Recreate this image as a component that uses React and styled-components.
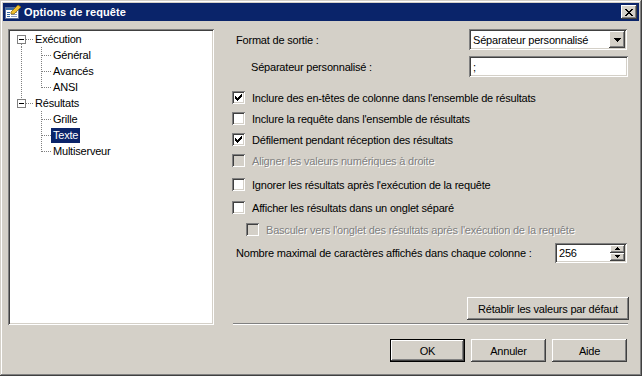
import React from "react";
import styled, { createGlobalStyle, css } from "styled-components";

const GlobalStyle = createGlobalStyle`
  html, body { margin: 0; padding: 0; background: #d4d0c8; }
  body { font-family: "Liberation Sans", Arial, sans-serif; font-size: 11px; color: #000; }
  * { box-sizing: border-box; }
`;

const raised = css`
  background: #d4d0c8;
  box-shadow: inset -1px -1px #404040, inset 1px 1px #ffffff, inset -2px -2px #808080, inset 2px 2px #d4d0c8;
`;
const sunken = css`
  box-shadow: inset 1px 1px #808080, inset -1px -1px #ffffff, inset 2px 2px #404040, inset -2px -2px #d4d0c8;
`;

const Window = styled.div`
  width: 642px;
  height: 376px;
  padding: 3px;
  display: flex;
  flex-direction: column;
  background: #d4d0c8;
  letter-spacing: -0.2px;
  box-shadow: inset -1px -1px #404040, inset 1px 1px #d4d0c8, inset -2px -2px #808080, inset 2px 2px #ffffff;
`;

const TitleBar = styled.div`
  height: 18px;
  background: #0a246a;
  display: flex;
  align-items: center;
  padding: 0 2px 0 2px;
  gap: 3px;
`;

const TitleText = styled.span`
  color: #fff;
  font-weight: bold;
  font-size: 11px;
  letter-spacing: 0.1px;
`;

const CloseButton = styled.div`
  ${raised};
  margin-left: auto;
  width: 16px;
  height: 14px;
  display: flex;
  align-items: center;
  justify-content: center;
`;

const Body = styled.div`
  flex: 1;
  display: flex;
  flex-direction: column;
  padding: 8px 10px 0 5px;
`;

const MainRow = styled.div`
  display: flex;
  gap: 18px;
`;

const Tree = styled.div`
  width: 206px;
  height: 296px;
  background: #fff;
  ${sunken};
  padding: 2px 2px;
  display: flex;
  flex-direction: column;
`;

const TreeRow = styled.div`
  height: 16px;
  display: flex;
  align-items: center;
`;

const TreeLabel = styled.span`
  padding: 1px 2px;
  margin-left: -2px;
  line-height: 13px;
  ${(p) =>
    p.$selected &&
    css`
      background: #0a246a;
      color: #fff;
    `}
`;

const RightPanel = styled.div`
  width: 397px;
  height: 296px;
  display: flex;
  flex-direction: column;
`;

const FieldRow = styled.div`
  height: 21px;
  margin-top: ${(p) => p.$mt || 0}px;
  display: flex;
  align-items: center;
  justify-content: space-between;
  padding-left: ${(p) => p.$indent || 4}px;
`;

const Combo = styled.div`
  width: 158px;
  height: 21px;
  margin-right: 2px;
  background: #fff;
  ${sunken};
  padding: 2px;
  display: flex;
  align-items: center;
`;

const ComboText = styled.span`
  flex: 1;
  padding-left: 2px;
`;

const DropButton = styled.div`
  ${raised};
  width: 16px;
  height: 17px;
  display: flex;
  align-items: center;
  justify-content: center;
`;

const TextInput = styled.div`
  width: 159px;
  height: 21px;
  margin-right: 1px;
  background: #fff;
  ${sunken};
  padding: 0 4px;
  display: flex;
  align-items: center;
`;

const CheckRow = styled.div`
  height: 21px;
  margin-top: ${(p) => p.$mt || 0}px;
  padding-left: ${(p) => p.$indent || 0}px;
  display: flex;
  align-items: center;
  gap: 7px;
  color: ${(p) => (p.$disabled ? "#808080" : "#000")};
  text-shadow: ${(p) => (p.$disabled ? "1px 1px 0 #fff" : "none")};
`;

const Box = styled.div`
  width: 13px;
  height: 13px;
  flex: none;
  background: ${(p) => (p.$disabled ? "#d4d0c8" : "#fff")};
  ${sunken};
  display: flex;
  align-items: center;
  justify-content: center;
`;

const Spin = styled.div`
  width: 72px;
  height: 20px;
  margin-right: 2px;
  background: #fff;
  ${sunken};
  padding: 2px;
  display: flex;
  align-items: stretch;
`;

const SpinText = styled.span`
  flex: 1;
  padding-left: 2px;
  display: flex;
  align-items: center;
`;

const SpinButtons = styled.div`
  width: 15px;
  display: flex;
  flex-direction: column;
`;

const SpinButton = styled.div`
  ${raised};
  flex: 1;
  display: flex;
  align-items: center;
  justify-content: center;
`;

const Spacer = styled.div`
  flex: 1;
`;

const Button = styled.div`
  ${raised};
  width: ${(p) => p.$w || 75}px;
  height: 23px;
  display: flex;
  align-items: center;
  justify-content: center;
  ${(p) =>
    p.$default &&
    css`
      box-shadow: inset 0 0 0 1px #000, inset -2px -2px #404040, inset 2px 2px #ffffff,
        inset -3px -3px #808080;
    `}
`;

const ResetButton = styled(Button)`
  align-self: flex-end;
`;

const Separator = styled.div`
  margin: 3px 1px 0 1px;
  height: 2px;
  border-top: 1px solid #808080;
  border-bottom: 1px solid #ffffff;
`;

const Footer = styled.div`
  margin-top: 14px;
  display: flex;
  justify-content: flex-end;
  gap: 6px;
  padding-right: 2px;
`;

const CHECK_RUNS = [2, 3, 4, 3, 2, 1, 0];

function CheckMark() {
  return (
    <svg width="7" height="7" viewBox="0 0 7 7" shapeRendering="crispEdges">
      {CHECK_RUNS.map((r, c) => (
        <rect key={c} x={c} y={r} width="1" height="3" fill="#000" />
      ))}
    </svg>
  );
}

function Check({ checked, disabled, indent, mt, children }) {
  return (
    <CheckRow $disabled={disabled} $indent={indent} $mt={mt}>
      <Box $disabled={disabled}>{checked && <CheckMark />}</Box>
      <span>{children}</span>
    </CheckRow>
  );
}

function TitleIcon() {
  return (
    <svg width="16" height="16" viewBox="0 0 16 16" shapeRendering="crispEdges">
      <rect x="0.5" y="3.5" width="13" height="11" fill="#fff" stroke="#5a6e9c" />
      <rect x="1" y="4" width="12" height="2" fill="#3a6ea5" />
      <rect x="2" y="8" width="3" height="1" fill="#3a6ea5" />
      <rect x="6" y="8" width="6" height="1" fill="#8a9ac0" />
      <rect x="2" y="10" width="3" height="1" fill="#3a6ea5" />
      <rect x="6" y="10" width="6" height="1" fill="#8a9ac0" />
      <rect x="2" y="12" width="3" height="1" fill="#3a6ea5" />
      <rect x="6" y="12" width="6" height="1" fill="#8a9ac0" />
      <polygon points="6,8 13,1 16,3 9,10 6,10" fill="#f0c030" stroke="#8a6a10" strokeWidth="0.8" shapeRendering="auto" />
    </svg>
  );
}

function CloseGlyph() {
  return (
    <svg width="8" height="7" viewBox="0 0 8 7" shapeRendering="crispEdges">
      {[0, 1, 2, 3, 4, 5, 6].map((i) => (
        <React.Fragment key={i}>
          <rect x={i} y={i} width="2" height="1" fill="#000" />
          <rect x={6 - i} y={i} width="2" height="1" fill="#000" />
        </React.Fragment>
      ))}
    </svg>
  );
}

function DownArrow() {
  return (
    <svg width="7" height="4" viewBox="0 0 7 4" shapeRendering="crispEdges">
      <rect x="0" y="0" width="7" height="1" fill="#000" />
      <rect x="1" y="1" width="5" height="1" fill="#000" />
      <rect x="2" y="2" width="3" height="1" fill="#000" />
      <rect x="3" y="3" width="1" height="1" fill="#000" />
    </svg>
  );
}

function SmallArrow({ up }) {
  return (
    <svg width="5" height="3" viewBox="0 0 5 3" shapeRendering="crispEdges" style={up ? undefined : { transform: "scaleY(-1)" }}>
      <rect x="2" y="0" width="1" height="1" fill="#000" />
      <rect x="1" y="1" width="3" height="1" fill="#000" />
      <rect x="0" y="2" width="5" height="1" fill="#000" />
    </svg>
  );
}

/* Tree connectors: drawn per row. x offsets relative to tree inner left edge. */
function Connector({ level, expander, lineAbove, lineBelow, parentLine, last }) {
  const dot = { stroke: "#808080", strokeDasharray: "1 1", strokeWidth: 1 };
  if (level === 0) {
    return (
      <svg width="25" height="16" viewBox="0 0 25 16" shapeRendering="crispEdges">
        {lineAbove && <line x1="11.5" y1="0" x2="11.5" y2="4" {...dot} />}
        {lineBelow && <line x1="11.5" y1="13" x2="11.5" y2="16" {...dot} />}
        <line x1="16" y1="8.5" x2="23" y2="8.5" {...dot} />
        {expander && (
          <g>
            <rect x="7.5" y="4.5" width="8" height="8" fill="#fff" stroke="#808080" />
            <rect x="9" y="8" width="5" height="1" fill="#000" />
          </g>
        )}
      </svg>
    );
  }
  return (
    <svg width="43" height="16" viewBox="0 0 43 16" shapeRendering="crispEdges">
      {parentLine && <line x1="11.5" y1="0" x2="11.5" y2="16" {...dot} />}
      <line x1="31.5" y1="0" x2="31.5" y2={last ? 9 : 16} {...dot} />
      <line x1="32" y1="8.5" x2="41" y2="8.5" {...dot} />
    </svg>
  );
}

const treeItems = [
  { label: "Exécution", level: 0, expander: true, lineBelow: true },
  { label: "Général", level: 1, parentLine: true },
  { label: "Avancés", level: 1, parentLine: true },
  { label: "ANSI", level: 1, parentLine: true, last: true },
  { label: "Résultats", level: 0, expander: true, lineAbove: true },
  { label: "Grille", level: 1 },
  { label: "Texte", level: 1, selected: true },
  { label: "Multiserveur", level: 1, last: true },
];

export default function App() {
  return (
    <>
      <GlobalStyle />
      <Window>
        <TitleBar>
          <TitleIcon />
          <TitleText>Options de requête</TitleText>
          <CloseButton>
            <CloseGlyph />
          </CloseButton>
        </TitleBar>
        <Body>
          <MainRow>
            <Tree>
              {treeItems.map((it) => (
                <TreeRow key={it.label}>
                  <Connector {...it} />
                  <TreeLabel $selected={it.selected}>{it.label}</TreeLabel>
                </TreeRow>
              ))}
            </Tree>
            <RightPanel>
              <FieldRow>
                <span>Format de sortie :</span>
                <Combo>
                  <ComboText>Séparateur personnalisé</ComboText>
                  <DropButton>
                    <DownArrow />
                  </DropButton>
                </Combo>
              </FieldRow>
              <FieldRow $mt={6} $indent={19}>
                <span>Séparateur personnalisé :</span>
                <TextInput>;</TextInput>
              </FieldRow>
              <Check checked mt={10}>Inclure des en-têtes de colonne dans l'ensemble de résultats</Check>
              <Check>Inclure la requête dans l'ensemble de résultats</Check>
              <Check checked>Défilement pendant réception des résultats</Check>
              <Check disabled>Aligner les valeurs numériques à droite</Check>
              <Check mt={3}>Ignorer les résultats après l'exécution de la requête</Check>
              <Check mt={2}>Afficher les résultats dans un onglet séparé</Check>
              <Check disabled mt={1} indent={14}>
                Basculer vers l'onglet des résultats après l'exécution de la requête
              </Check>
              <FieldRow $mt={2}>
                <span>Nombre maximal de caractères affichés dans chaque colonne :</span>
                <Spin>
                  <SpinText>256</SpinText>
                  <SpinButtons>
                    <SpinButton>
                      <SmallArrow up />
                    </SpinButton>
                    <SpinButton>
                      <SmallArrow />
                    </SpinButton>
                  </SpinButtons>
                </Spin>
              </FieldRow>
              <Spacer />
              <ResetButton $w={162}>Rétablir les valeurs par défaut</ResetButton>
              <Separator />
            </RightPanel>
          </MainRow>
          <Footer>
            <Button $default>OK</Button>
            <Button>Annuler</Button>
            <Button>Aide</Button>
          </Footer>
        </Body>
      </Window>
    </>
  );
}
